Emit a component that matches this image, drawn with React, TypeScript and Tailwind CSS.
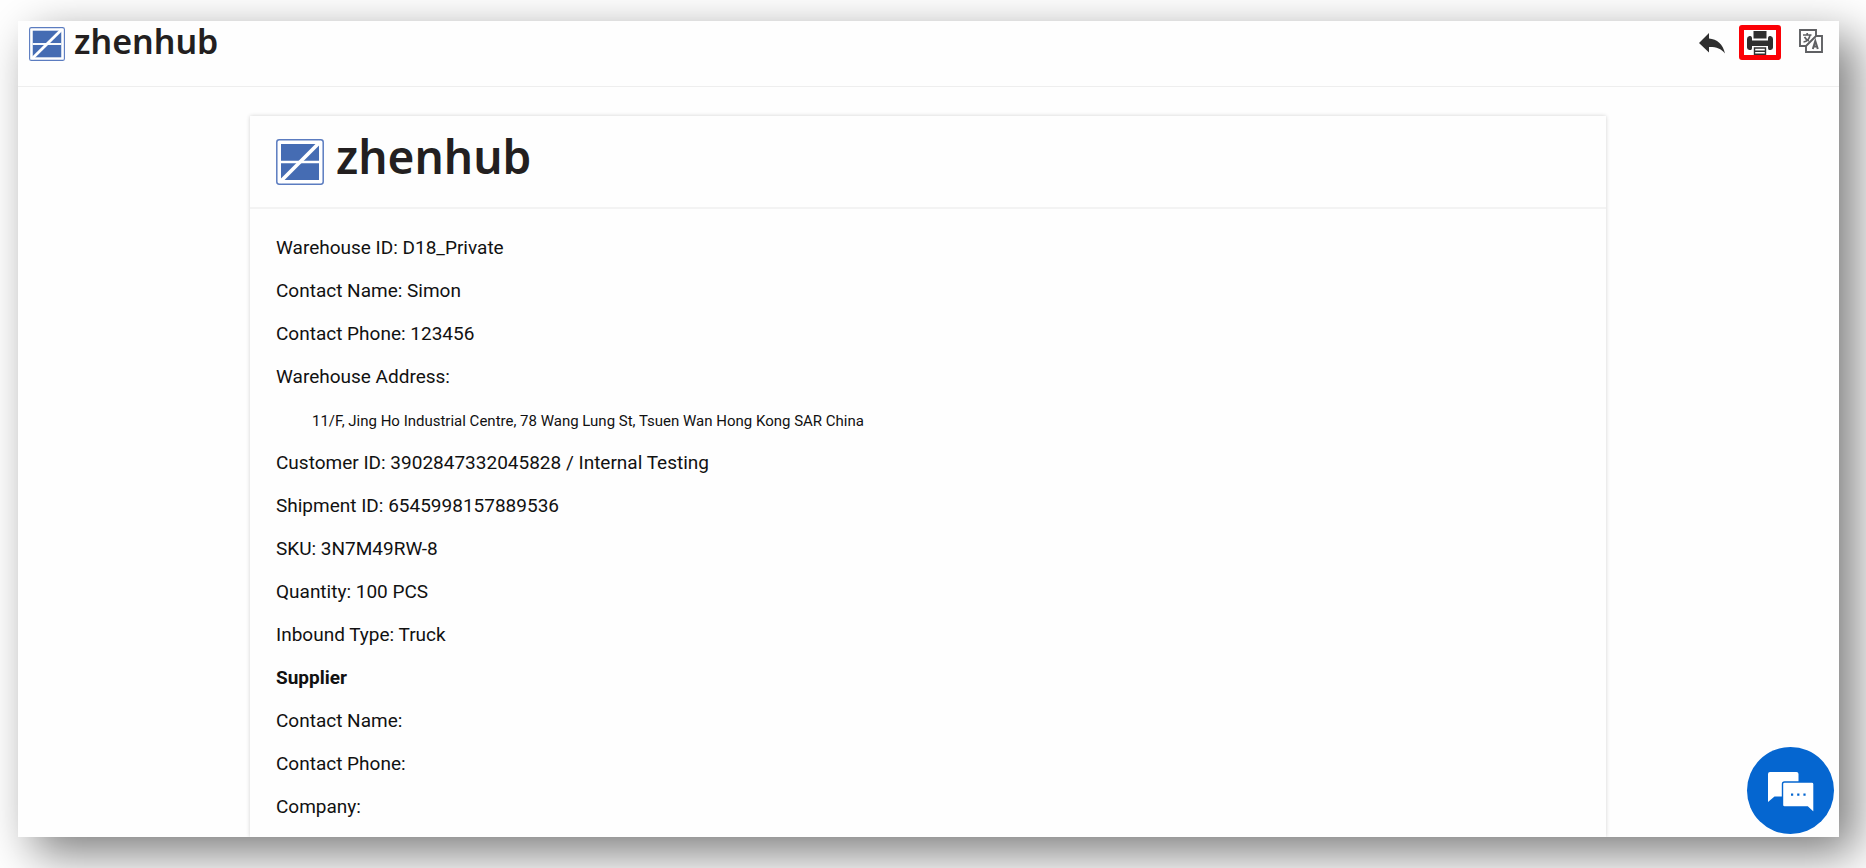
import React from 'react';

const SHIPMENT_LINES = [
  'Customer ID: 3902847332045828 / Internal Testing',
  'Shipment ID: 6545998157889536',
  'SKU: 3N7M49RW-8',
  'Quantity: 100 PCS',
  'Inbound Type: Truck',
];

const LogoMark: React.FC<{ className: string }> = ({ className }) => (
  <svg viewBox="0 0 48 46" preserveAspectRatio="none" className={className} aria-hidden="true">
    <rect x="0.8" y="0.8" width="46.4" height="44.4" rx="2.4" fill="#fff" stroke="#5b7cc0" strokeWidth="1.5" />
    <rect x="5" y="5" width="38" height="36" fill="#456cb3" />
    <path d="M5 23H43" stroke="#fff" strokeWidth="2.6" />
    <path d="M4 43L44 3" stroke="#fff" strokeWidth="3.8" />
  </svg>
);

const ReplyIcon = () => (
  <svg viewBox="0 0 26 21" className="h-[21px] w-[26px]" fill="#2f2f2f" aria-hidden="true">
    <path d="M0 10L10 0V5.5C18 6 24 11 26 20.5C22 15.500 17 13.800 10 14V19.500Z" />
  </svg>
);

const PrintIcon = () => (
  <svg viewBox="0 0 26 24" className="h-6 w-[26px] shrink-0" aria-hidden="true">
    <g fill="#2f2f2f">
      <path d="M6.500 0H19.500V7.500H6.500Z" />
      <path d="M0 8Q0 5.500 2.500 5H3.500Q5 5.500 5 7V9.500H21V7Q21 5.500 22.500 5H23.500Q26 5.500 26 8V16.500Q26 18.500 23.500 19H22Q21 18.500 21 17V15H5V17Q5 18.500 4 19H2.500Q0 18.500 0 16.500Z" />
    </g>
    <path d="M7.500 17H18.500V23.300H7.500ZM7.500 20.200H18.500" fill="#fff" stroke="#2f2f2f" strokeWidth="1.400" />
  </svg>
);

const TranslateIcon = () => (
  <svg viewBox="0 0 24 24" className="h-6 w-6" fill="none" stroke="#5f6063" strokeWidth="1.900" aria-hidden="true">
    <path d="M7 17H1V1H17V7" />
    <path d="M17 7H23V23H7V17L17 7Z" />
    <path d="M4 6H12.500M8.200 4V6M11 6C10.500 9.500 8 12.500 4.500 13M5.500 8C7 10.500 8 11.500 10 12" strokeWidth="1.700" />
    <path d="M13.800 20L16.300 12L18.800 20M14.500 17.500H18" strokeWidth="2" />
  </svg>
);

const ChatIcon = () => (
  <svg viewBox="0 0 46 41" className="h-[41px] w-[46px]" aria-hidden="true">
    <path d="M2 0H28.500Q30.500 0 30.500 2V24.500H6.500L0 30V2Q0 0 2 0Z" fill="#fff" />
    <path
      d="M16.500 10H44Q46 10 46 12V41L39.500 35H16.500Q14.500 35 14.500 33V12Q14.500 10 16.500 10Z"
      fill="#fff"
      stroke="#0566d0"
      strokeWidth="1.400"
    />
    <path d="M23 21.500H25.200V23.700H23ZM29.200 21.500H31.400V23.700H29.200ZM35.400 21.500H37.600V23.700H35.400Z" fill="#0566d0" />
  </svg>
);

export default function App() {
  return (
    <div className="h-screen overflow-hidden bg-white pt-[21px] pr-[27px] pb-[31px] pl-[18px] font-['Roboto',sans-serif] text-[#111]">
      <div className="relative flex h-full flex-col bg-[#fefefe] shadow-[16px_16px_44px_rgba(0,0,0,0.52)]">
        {/* Top bar */}
        <header className="flex h-[66px] shrink-0 items-start justify-between border-b border-[#eee] pr-4 pl-[11px]">
          <a href="#" className="flex items-start gap-[9px]">
            <LogoMark className="mt-[6px] h-[34px] w-[36px]" />
            <span className="font-['Noto_Sans',sans-serif] text-[34px] leading-[40px] font-semibold text-[#231f20]">zhenhub</span>
          </a>
          <nav className="flex items-start gap-[14px] pt-1">
            <button type="button" aria-label="Back" className="mt-2">
              <ReplyIcon />
            </button>
            <button
              type="button"
              aria-label="Print"
              className="flex h-[35px] w-[42px] items-center justify-center rounded-[3px] border-5 border-[#fb0006]"
            >
              <PrintIcon />
            </button>
            <button type="button" aria-label="Language" className="mt-1 ml-1">
              <TranslateIcon />
            </button>
          </nav>
        </header>

        {/* Inbound label */}
        <main className="min-h-0 flex-1 overflow-hidden pt-[29px] pr-[233px] pl-[232px]">
          <article className="h-full shadow-[0_0_4px_rgba(0,0,0,0.18)]">
            <div className="flex h-[93px] items-start gap-3 border-b-2 border-[#f3f3f3] pt-[23px] pl-[26px]">
              <LogoMark className="h-[46px] w-[48px]" />
              <span className="-mt-3 font-['Noto_Sans',sans-serif] text-[46px] leading-[58px] font-semibold text-[#231f20]">zhenhub</span>
            </div>
            <div className="px-[26px] pt-[17px] text-[19px] leading-[43px]">
              <p>Warehouse ID: D18_Private</p>
              <p>Contact Name: Simon</p>
              <p>Contact Phone: 123456</p>
              <p>Warehouse Address:</p>
              <p className="pt-1 pl-9 text-[15px] leading-[39px]">
                11/F, Jing Ho Industrial Centre, 78 Wang Lung St, Tsuen Wan Hong Kong SAR China
              </p>
              {SHIPMENT_LINES.map((line) => (
                <p key={line}>{line}</p>
              ))}
              <h2 className="font-bold">Supplier</h2>
              <p>Contact Name:</p>
              <p>Contact Phone:</p>
              <p>Company:</p>
            </div>
          </article>
        </main>

        <button
          type="button"
          aria-label="Open chat"
          className="absolute right-[5px] bottom-[3px] flex h-[87px] w-[87px] items-center justify-center rounded-full bg-[#0566d0] pt-1"
        >
          <ChatIcon />
        </button>
      </div>
    </div>
  );
}
